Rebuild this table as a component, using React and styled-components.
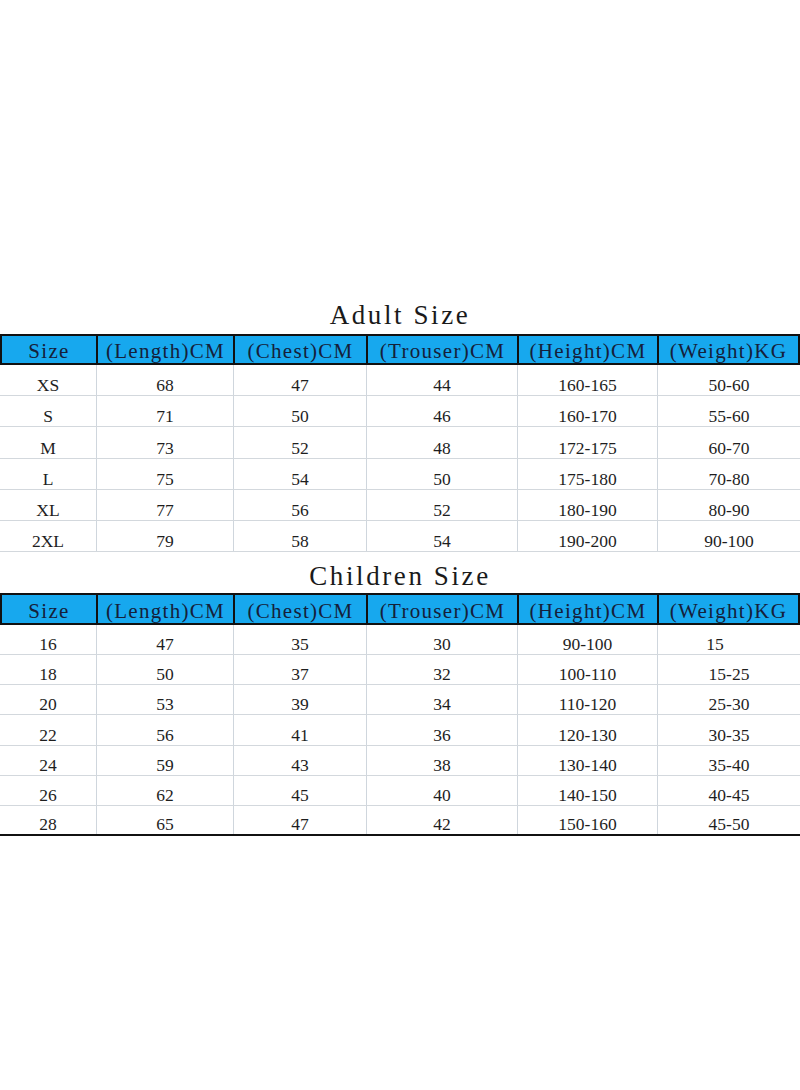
import React from 'react';
import styled, { createGlobalStyle } from 'styled-components';

const GlobalStyle = createGlobalStyle`
  html, body {
    margin: 0;
    padding: 0;
    background: #ffffff;
  }
  body {
    font-family: "Liberation Serif", "Times New Roman", serif;
    color: #222;
  }
`;

const Page = styled.div`
  width: 800px;
  height: 1090px;
  padding-top: 297px;
  box-sizing: border-box;
  overflow: hidden;
`;

const Title = styled.div`
  height: ${props => props.height}px;
  display: flex;
  align-items: flex-end;
  justify-content: center;
  padding-bottom: ${props => props.gap}px;
  box-sizing: border-box;
  font-size: 27px;
  line-height: 27px;
  letter-spacing: 2.6px;
  color: #1a1a1a;
  white-space: pre;
`;

const Row = styled.div`
  display: grid;
  grid-template-columns: 96px 137px 133px 151px 140px 1fr;
  box-sizing: border-box;
`;

const HeaderRow = styled(Row)`
  height: ${props => props.height}px;
  background: #17a8ee;
  border-top: 2px solid #111;
  border-bottom: 2px solid #111;
`;

const HeaderCell = styled.div`
  display: flex;
  align-items: flex-end;
  justify-content: center;
  padding-bottom: 1px;
  border-left: 2px solid #111;
  box-sizing: border-box;
  font-size: 21px;
  line-height: 21px;
  letter-spacing: 1.3px;
  color: #15203a;
  white-space: nowrap;

  &:last-child {
    border-right: 2px solid #111;
  }
`;

const DataRow = styled(Row)`
  height: ${props => props.height}px;
  border-bottom: ${props => props.closed ? '2px solid #111' : '1px solid #d3d8dd'};
`;

const DataCell = styled.div`
  display: flex;
  align-items: flex-end;
  justify-content: center;
  padding-bottom: 1px;
  padding-right: ${props => props.nudge || 0}px;
  border-left: 1px solid #cfd6dd;
  box-sizing: border-box;
  font-size: 17.5px;
  line-height: 17px;
  color: #1e1e1e;

  &:first-child {
    border-left: none;
  }
`;

const columns = ['Size', '(Length)CM', '(Chest)CM', '(Trouser)CM', '(Height)CM', '(Weight)KG'];

const adultRows = [
  ['XS', '68', '47', '44', '160-165', '50-60'],
  ['S', '71', '50', '46', '160-170', '55-60'],
  ['M', '73', '52', '48', '172-175', '60-70'],
  ['L', '75', '54', '50', '175-180', '70-80'],
  ['XL', '77', '56', '52', '180-190', '80-90'],
  ['2XL', '79', '58', '54', '190-200', '90-100'],
];

const childRows = [
  ['16', '47', '35', '30', '90-100', '15'],
  ['18', '50', '37', '32', '100-110', '15-25'],
  ['20', '53', '39', '34', '110-120', '25-30'],
  ['22', '56', '41', '36', '120-130', '30-35'],
  ['24', '59', '43', '38', '130-140', '35-40'],
  ['26', '62', '45', '40', '140-150', '40-45'],
  ['28', '65', '47', '42', '150-160', '45-50'],
];

// the lone "15" sits left of the column centre in the original chart
const nudgeFor = value => (value === '15' ? 28 : 0);

const SizeTable = ({ title, titleHeight, titleGap, headerHeight, rowHeight, rows, closed }) => (
  <section>
    <Title height={titleHeight} gap={titleGap}>{title}</Title>
    <HeaderRow height={headerHeight}>
      {columns.map(col => (
        <HeaderCell key={col}>{col}</HeaderCell>
      ))}
    </HeaderRow>
    {rows.map((row, i) => (
      <DataRow
        key={row[0]}
        height={rowHeight}
        closed={closed && i === rows.length - 1}
      >
        {row.map((value, j) => (
          <DataCell key={j} nudge={j === 5 ? nudgeFor(value) : 0}>
            {value}
          </DataCell>
        ))}
      </DataRow>
    ))}
  </section>
);

const App = () => (
  <>
    <GlobalStyle />
    <Page>
      <SizeTable
        title="Adult Size"
        titleHeight={37}
        titleGap={5}
        headerHeight={31}
        rowHeight={31.2}
        rows={adultRows}
      />
      <SizeTable
        title="Children Size"
        titleHeight={41}
        titleGap={3}
        headerHeight={32}
        rowHeight={30.1}
        rows={childRows}
        closed
      />
    </Page>
  </>
);

export default App;
